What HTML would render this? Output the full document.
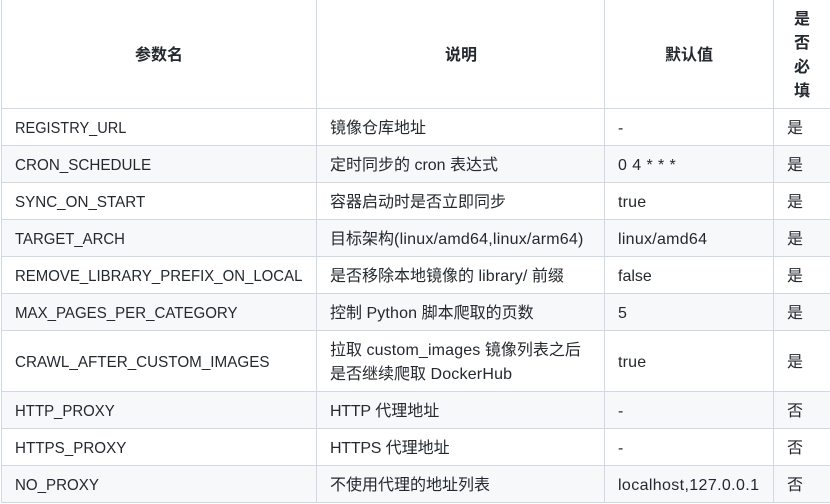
<!DOCTYPE html>
<html lang="zh">
<head>
<meta charset="utf-8">
<title>参数表</title>
<style>
html,body{margin:0;padding:0;background:#fff;width:830px;height:504px;overflow:hidden}
body{position:relative;font-family:"Liberation Sans","Noto Sans CJK SC",sans-serif;font-size:16px;color:#24292f;line-height:24px}
.s{position:absolute;left:1px;width:829px;background:#f6f8fa}
.h{position:absolute;left:1px;width:829px;height:1px;background:#d0d9e3}
.v{position:absolute;top:0;width:1px;height:503px;background:#d0d9e3}
.t{position:absolute;white-space:nowrap;transform-origin:0 50%}
.b{font-weight:700;transform:translateX(-50%)}
</style>
</head>
<body>
<div class="s" style="top:146px;height:36px"></div>
<div class="s" style="top:220px;height:36px"></div>
<div class="s" style="top:294px;height:36px"></div>
<div class="s" style="top:392px;height:36px"></div>
<div class="s" style="top:466px;height:36px"></div>

<div class="h" style="top:108px"></div>
<div class="h" style="top:145px"></div>
<div class="h" style="top:182px"></div>
<div class="h" style="top:219px"></div>
<div class="h" style="top:256px"></div>
<div class="h" style="top:293px"></div>
<div class="h" style="top:330px"></div>
<div class="h" style="top:391px"></div>
<div class="h" style="top:428px"></div>
<div class="h" style="top:465px"></div>
<div class="h" style="top:502px"></div>
<div class="v" style="left:1px"></div>
<div class="v" style="left:316px"></div>
<div class="v" style="left:604px"></div>
<div class="v" style="left:773px"></div>

<div class="t b" style="left:159px;top:44px">参数名</div>
<div class="t b" style="left:461px;top:44px">说明</div>
<div class="t b" style="left:689px;top:44px">默认值</div>
<div class="t b" style="left:802px;top:8px">是</div>
<div class="t b" style="left:802px;top:32px">否</div>
<div class="t b" style="left:802px;top:56px">必</div>
<div class="t b" style="left:802px;top:80px">填</div>

<div class="t" style="left:15px;top:117px;transform:scaleX(.91)">REGISTRY_URL</div>
<div class="t" style="left:330px;top:117px">镜像仓库地址</div>
<div class="t" style="left:618px;top:117px">-</div>
<div class="t" style="left:787px;top:117px">是</div>

<div class="t" style="left:15px;top:154px;transform:scaleX(.951)">CRON_SCHEDULE</div>
<div class="t" style="left:330px;top:154px">定时同步的 cron 表达式</div>
<div class="t" style="left:618px;top:154px;letter-spacing:.44px">0 4 * * *</div>
<div class="t" style="left:787px;top:154px">是</div>

<div class="t" style="left:15px;top:191px;transform:scaleX(.949)">SYNC_ON_START</div>
<div class="t" style="left:330px;top:191px">容器启动时是否立即同步</div>
<div class="t" style="left:618px;top:191px;letter-spacing:.2px">true</div>
<div class="t" style="left:787px;top:191px">是</div>

<div class="t" style="left:15px;top:228px;transform:scaleX(.932)">TARGET_ARCH</div>
<div class="t" style="left:330px;top:228px">目标架构<span style="letter-spacing:.22px">(linux/amd64,linux/arm64)</span></div>
<div class="t" style="left:618px;top:228px;letter-spacing:.27px">linux/amd64</div>
<div class="t" style="left:787px;top:228px">是</div>

<div class="t" style="left:15px;top:265px;transform:scaleX(.935)">REMOVE_LIBRARY_PREFIX_ON_LOCAL</div>
<div class="t" style="left:330px;top:265px">是否移除本地镜像的 <span style="letter-spacing:.12px">library/</span> 前缀</div>
<div class="t" style="left:618px;top:265px">false</div>
<div class="t" style="left:787px;top:265px">是</div>

<div class="t" style="left:15px;top:302px;transform:scaleX(.941)">MAX_PAGES_PER_CATEGORY</div>
<div class="t" style="left:330px;top:302px">控制 <span style="letter-spacing:.15px">Python</span> 脚本爬取的页数</div>
<div class="t" style="left:618px;top:302px">5</div>
<div class="t" style="left:787px;top:302px">是</div>

<div class="t" style="left:15px;top:351px;transform:scaleX(.951)">CRAWL_AFTER_CUSTOM_IMAGES</div>
<div class="t" style="left:330px;top:339px">拉取 <span style="letter-spacing:.15px">custom_images</span> 镜像列表之后</div>
<div class="t" style="left:330px;top:363px">是否继续爬取 <span style="letter-spacing:.2px">DockerHub</span></div>
<div class="t" style="left:618px;top:351px;letter-spacing:.2px">true</div>
<div class="t" style="left:787px;top:351px">是</div>

<div class="t" style="left:15px;top:400px;transform:scaleX(.935)">HTTP_PROXY</div>
<div class="t" style="left:330px;top:400px"><span style="letter-spacing:-.25px">HTTP</span> 代理地址</div>
<div class="t" style="left:618px;top:400px">-</div>
<div class="t" style="left:787px;top:400px">否</div>

<div class="t" style="left:15px;top:437px;transform:scaleX(.949)">HTTPS_PROXY</div>
<div class="t" style="left:330px;top:437px"><span style="letter-spacing:-.25px">HTTPS</span> 代理地址</div>
<div class="t" style="left:618px;top:437px">-</div>
<div class="t" style="left:787px;top:437px">否</div>

<div class="t" style="left:15px;top:474px;transform:scaleX(.944)">NO_PROXY</div>
<div class="t" style="left:330px;top:474px">不使用代理的地址列表</div>
<div class="t" style="left:618px;top:474px;letter-spacing:.37px">localhost,127.0.0.1</div>
<div class="t" style="left:787px;top:474px">否</div>
</body>
</html>
